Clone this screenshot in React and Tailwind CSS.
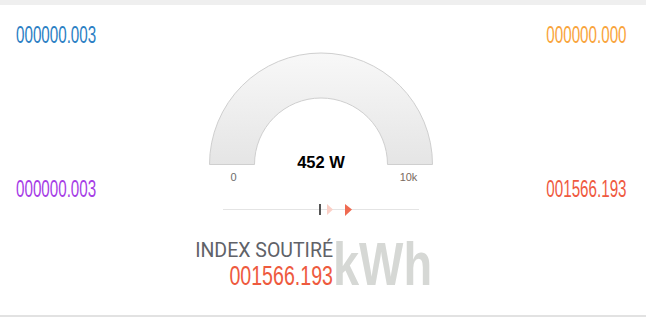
export default function App() {
  const num = "font-['Liberation_Sans','Arial',sans-serif]"

  return (
    <div className="w-[646px] h-[317px] bg-white flex flex-col overflow-hidden">
      <div className="h-[5px] bg-[#efefef]" />

      <div className="flex-1 flex">
        {/* left readings */}
        <div className="w-[148px] pl-[16px] flex flex-col items-start">
          <span className={`${num} mt-[19px] inline-block text-[23px] leading-[23px] text-[#2b80c4] scale-x-[0.66] origin-left`}>
            000000.003
          </span>
          <span className={`${num} mt-[131px] inline-block text-[23px] leading-[23px] text-[#a63de6] scale-x-[0.66] origin-left`}>
            000000.003
          </span>
        </div>

        {/* gauge */}
        <div className="flex-1 flex flex-col items-center">
          <svg width="228" height="134" className="mt-[45px]">
            <defs>
              <linearGradient id="g" x1="0" y1="0" x2="0" y2="1">
                <stop offset="0" stopColor="#f8f8f8" />
                <stop offset="1" stopColor="#e5e5e5" />
              </linearGradient>
            </defs>
            <path
              d="M 2.5 114.5 A 111.5 111.5 0 0 1 225.5 114.5 L 180.5 114.5 A 66.5 66.5 0 0 0 47.5 114.5 Z"
              fill="url(#g)"
              stroke="#cfcfcf"
              strokeWidth="1"
            />
            <text x="114" y="118" textAnchor="middle" fontFamily="Liberation Sans, Arial, sans-serif" fontWeight="700" fontSize="16.5" fill="#000">
              452 W
            </text>
            <text x="26.5" y="131" textAnchor="middle" fontFamily="Liberation Sans, Arial, sans-serif" fontSize="11" fill="#6d6d6d">
              0
            </text>
            <text x="201.5" y="131" textAnchor="middle" fontFamily="Liberation Sans, Arial, sans-serif" fontSize="11" fill="#7a6a60">
              10k
            </text>
          </svg>

          <svg width="196" height="12" className="mt-[20px]">
            <line x1="0" y1="5.5" x2="196" y2="5.5" stroke="#e4e4e4" strokeWidth="1" />
            <rect x="96" y="0" width="2" height="11" fill="#555" />
            <polygon points="104,0 110,5.5 104,11" fill="#fbd0c7" />
            <polygon points="122,0 129,5.5 122,12" fill="#ef6a51" />
          </svg>

          <div className="self-start ml-[37px] mt-[23px] flex items-end">
            <div className="w-[148px] flex flex-col items-end">
              <span className="font-['Roboto',sans-serif] text-[19.5px] leading-[19px] text-[#606268]">
                INDEX SOUTIRÉ
              </span>
              <span className={`${num} mt-[2px] inline-block text-[28px] leading-[28px] text-[#ee5a3e] scale-x-[0.70] origin-right`}>
                001566.193
              </span>
            </div>
            <span className={`${num} inline-block font-bold text-[61px] leading-[51px] text-[#d6d8d5] scale-x-[0.77] origin-left`}>
              kWh
            </span>
          </div>
        </div>

        {/* right readings */}
        <div className="w-[152px] pr-[19px] flex flex-col items-end">
          <span className={`${num} mt-[19px] inline-block text-[23px] leading-[23px] text-[#f9a43b] scale-x-[0.66] origin-right`}>
            000000.000
          </span>
          <span className={`${num} mt-[131px] inline-block text-[23px] leading-[23px] text-[#ef5a3f] scale-x-[0.66] origin-right`}>
            001566.193
          </span>
        </div>
      </div>

      <div className="h-[2px] bg-[#e2e2e2]" />
    </div>
  )
}
